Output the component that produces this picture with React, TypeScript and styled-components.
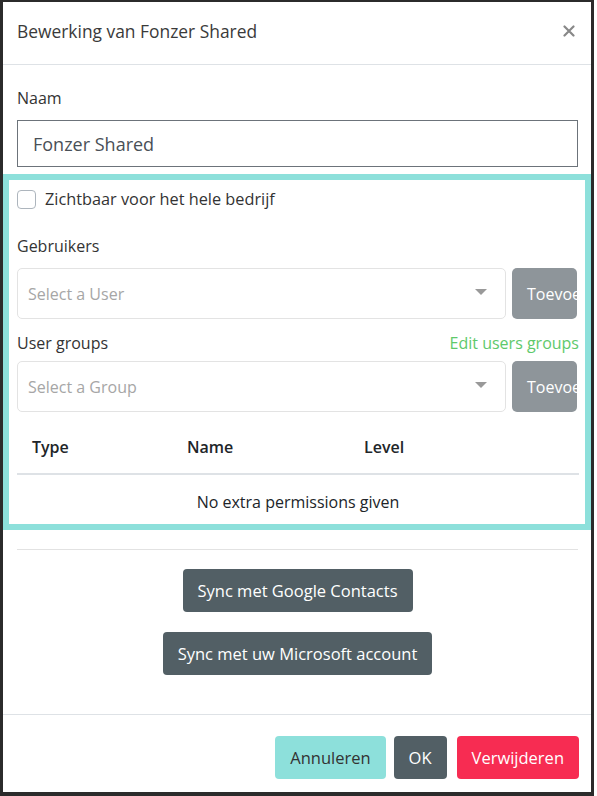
import React from "react";
import styled, { createGlobalStyle } from "styled-components";

const GlobalStyle = createGlobalStyle`
  html, body { margin: 0; padding: 0; background: #ffffff; }
  body { font-family: "Open Sans", "Noto Sans", sans-serif; color: #333333; }
  * { box-sizing: border-box; }
`;

const Frame = styled.div`
  width: 594px;
  height: 796px;
  border-style: solid;
  border-color: #2b2b2b;
  border-width: 2px 3px 4px 3px;
  background: #ffffff;
  display: flex;
  flex-direction: column;
`;

const Header = styled.div`
  height: 63px;
  flex: none;
  display: flex;
  align-items: center;
  justify-content: space-between;
  padding: 0 12px 4px 14px;
  border-bottom: 1px solid #dee2e6;
`;

const Title = styled.h5`
  margin: 0;
  font-size: 17.4px;
  font-weight: 400;
  color: #3a3a3a;
`;

const Close = styled.button`
  border: none;
  background: none;
  padding: 0;
  width: 20px;
  height: 20px;
  display: flex;
  align-items: center;
  justify-content: center;
  cursor: pointer;
`;

const Body = styled.div`
  flex: 1;
  padding: 22px 13px 0 14px;
  display: flex;
  flex-direction: column;
`;

const Label = styled.div`
  font-size: 16px;
  line-height: 22px;
  color: #333333;
`;

const TextInput = styled.input`
  display: block;
  width: 100%;
  height: 47px;
  margin-top: 11px;
  border: 1px solid #6c737a;
  border-radius: 0;
  padding: 0 15px;
  font-family: inherit;
  font-size: 18px;
  color: #495057;
  outline: none;
`;

const Highlight = styled.div`
  margin: 7px -13px 0 -14px;
  border: 6px solid #8de0db;
  padding: 9px 6px 0 8px;
  height: 356px;
`;

const CheckRow = styled.label`
  display: flex;
  align-items: center;
  gap: 9px;
  font-size: 16.3px;
  color: #333333;
  height: 20px;
`;

const Box = styled.span`
  width: 19px;
  height: 19px;
  border: 1px solid #adb5bd;
  border-radius: 4px;
  background: #fff;
  flex: none;
`;

const FieldLabelRow = styled.div<{ $top: number }>`
  display: flex;
  justify-content: space-between;
  align-items: center;
  margin-top: ${(p) => p.$top}px;
  height: 22px;
`;

const GreenLink = styled.a`
  font-size: 16px;
  color: #5ec96b;
  text-decoration: none;
`;

const SelectRow = styled.div<{ $top: number }>`
  display: flex;
  gap: 6px;
  margin-top: ${(p) => p.$top}px;
  padding-right: 2px;
`;

const SelectBox = styled.div`
  flex: 1;
  height: 51px;
  border: 1px solid #e3e3e3;
  border-radius: 5px;
  display: flex;
  align-items: center;
  justify-content: space-between;
  padding: 0 18px 0 10px;
  font-size: 16px;
  color: #a6a6a6;
`;

const Caret = styled.span`
  width: 0;
  height: 0;
  border-left: 6px solid transparent;
  border-right: 6px solid transparent;
  border-top: 6px solid #999999;
  margin-top: -4px;
`;

const AddButton = styled.button`
  width: 65px;
  height: 51px;
  flex: none;
  overflow: hidden;
  white-space: nowrap;
  text-align: left;
  padding: 0 0 0 15px;
  border: none;
  border-radius: 5px;
  background: #8e959a;
  color: #ffffff;
  font-family: inherit;
  font-size: 16px;
`;

const Table = styled.table`
  width: 100%;
  border-collapse: collapse;
  margin-top: 13px;
`;

const Th = styled.th<{ $w?: number }>`
  text-align: left;
  font-weight: 600;
  font-size: 16px;
  color: #212529;
  padding: 0 15px 5px 15px;
  height: 49px;
  width: ${(p) => (p.$w ? `${p.$w}px` : "auto")};
  border-bottom: 2px solid #dee2e6;
`;

const Td = styled.td`
  text-align: center;
  font-size: 16px;
  color: #212529;
  height: 48px;
  padding: 6px 0 0 0;
`;

const Divider = styled.hr`
  border: none;
  border-top: 1px solid #e2e2e2;
  margin: 19px 0 0 0;
`;

const SyncStack = styled.div`
  display: flex;
  flex-direction: column;
  align-items: center;
  gap: 20px;
  margin-top: 19px;
`;

const Btn = styled.button<{ $variant: "dark" | "teal" | "red" }>`
  height: 43px;
  padding: 0 15px;
  border: none;
  border-radius: 4px;
  font-family: inherit;
  font-size: 16.5px;
  cursor: pointer;
  background: ${(p) =>
    p.$variant === "dark" ? "#525f65" : p.$variant === "teal" ? "#8de0db" : "#f72c52"};
  color: ${(p) => (p.$variant === "teal" ? "#333333" : "#ffffff")};
`;

const Footer = styled.div`
  flex: none;
  height: 78px;
  border-top: 1px solid #dee2e6;
  display: flex;
  justify-content: flex-end;
  align-items: flex-start;
  padding: 21px 12px 0 14px;
`;

const FooterGap = styled.span<{ $w: number }>`
  width: ${(p) => p.$w}px;
  flex: none;
`;

export default function App() {
  return (
    <>
      <GlobalStyle />
      <Frame>
        <Header>
          <Title>Bewerking van Fonzer Shared</Title>
          <Close aria-label="close">
            <svg width="12" height="12" viewBox="0 0 12 12">
              <path d="M1.5 1.5 L10.5 10.5 M10.5 1.5 L1.5 10.5" stroke="#888" strokeWidth="2.2" strokeLinecap="round" />
            </svg>
          </Close>
        </Header>
        <Body>
          <Label>Naam</Label>
          <TextInput defaultValue="Fonzer Shared" />
          <Highlight>
            <CheckRow>
              <Box />
              Zichtbaar voor het hele bedrijf
            </CheckRow>
            <FieldLabelRow $top={26}>
              <Label>Gebruikers</Label>
            </FieldLabelRow>
            <SelectRow $top={11}>
              <SelectBox>
                Select a User
                <Caret />
              </SelectBox>
              <AddButton>Toevoegen</AddButton>
            </SelectRow>
            <FieldLabelRow $top={13}>
              <Label>User groups</Label>
              <GreenLink href="#">Edit users groups</GreenLink>
            </FieldLabelRow>
            <SelectRow $top={7}>
              <SelectBox>
                Select a Group
                <Caret />
              </SelectBox>
              <AddButton>Toevoegen</AddButton>
            </SelectRow>
            <Table>
              <thead>
                <tr>
                  <Th $w={155}>Type</Th>
                  <Th $w={177}>Name</Th>
                  <Th>Level</Th>
                </tr>
              </thead>
              <tbody>
                <tr>
                  <Td colSpan={3}>No extra permissions given</Td>
                </tr>
              </tbody>
            </Table>
          </Highlight>
          <Divider />
          <SyncStack>
            <Btn $variant="dark">Sync met Google Contacts</Btn>
            <Btn $variant="dark">Sync met uw Microsoft account</Btn>
          </SyncStack>
        </Body>
        <Footer>
          <Btn $variant="teal">Annuleren</Btn>
          <FooterGap $w={8} />
          <Btn $variant="dark">OK</Btn>
          <FooterGap $w={10} />
          <Btn $variant="red">Verwijderen</Btn>
        </Footer>
      </Frame>
    </>
  );
}
